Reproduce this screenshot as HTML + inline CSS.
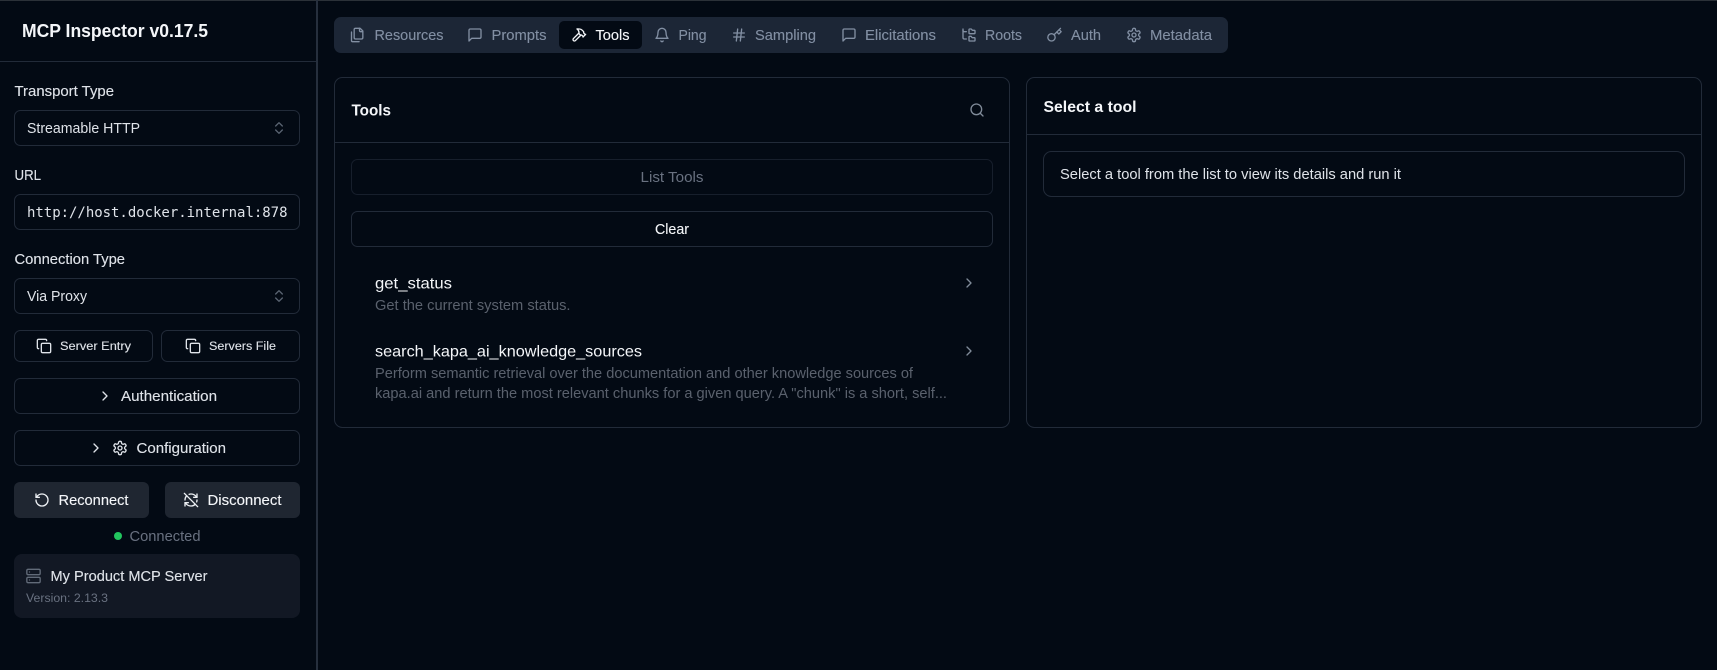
<!DOCTYPE html>
<html lang="en"><head><meta charset="utf-8"><title>MCP Inspector</title>
<style>
html,body{margin:0;padding:0;background:#030a14;width:1717px;height:670px;overflow:hidden}
svg.page{display:block}
text{font-family:"Liberation Sans",sans-serif;font-size:14.4px;fill:#e2e8f0;white-space:pre}
.m{stroke:currentColor;stroke-width:.12px}
.lab{fill:#dfe3e9;color:#dfe3e9}
.tab{fill:#828fa3;color:#828fa3;font-size:14.4px}
.dim{fill:#5a616d}
.w{fill:#f4f6f9;color:#f4f6f9}
.b{fill:none;stroke:#222b39;stroke-width:1}
.ic{fill:none;stroke-width:2;stroke-linecap:round;stroke-linejoin:round}
</style></head><body>
<svg class="page" xmlns="http://www.w3.org/2000/svg" width="1717" height="670" viewBox="0 0 1717 670">
<defs>
<symbol id="copy" viewBox="0 0 24 24"><rect x="8" y="8" width="14" height="14" rx="2"/><path d="M4 16c-1.1 0-2-.9-2-2V4c0-1.1.9-2 2-2h10c1.1 0 2 .9 2 2"/></symbol>
<symbol id="files" viewBox="0 0 24 24"><path d="M20 7h-3a2 2 0 0 1-2-2V2"/><path d="M9 18a2 2 0 0 1-2-2V4a2 2 0 0 1 2-2h7l4 4v10a2 2 0 0 1-2 2Z"/><path d="M3 7.6v12.8A1.6 1.6 0 0 0 4.6 22h9.8"/></symbol>
<symbol id="msg" viewBox="0 0 24 24"><path d="M21 15a2 2 0 0 1-2 2H7l-4 4V5a2 2 0 0 1 2-2h14a2 2 0 0 1 2 2z"/></symbol>
<symbol id="hammer" viewBox="0 0 24 24"><path d="m15 12-8.373 8.373a1 1 0 1 1-3-3L12 9"/><path d="m18 15 4-4"/><path d="m21.5 11.5-1.914-1.914A2 2 0 0 1 19 8.172V7l-2.26-2.26a6 6 0 0 0-4.202-1.756L9 2.96l.92.82A6.18 6.18 0 0 1 12 8.4V10l2 2h1.172a2 2 0 0 1 1.414.586L18.5 14.5"/></symbol>
<symbol id="bell" viewBox="0 0 24 24"><path d="M6 8a6 6 0 0 1 12 0c0 7 3 9 3 9H3s3-2 3-9"/><path d="M10.3 21a1.94 1.94 0 0 0 3.4 0"/></symbol>
<symbol id="hash" viewBox="0 0 24 24"><path d="M4 9h16M4 15h16M10 3 8 21M16 3l-2 18"/></symbol>
<symbol id="tree" viewBox="0 0 24 24"><path d="M20 10a1 1 0 0 0 1-1V6a1 1 0 0 0-1-1h-2.5a1 1 0 0 1-.8-.4l-.9-1.2A1 1 0 0 0 15 3h-2a1 1 0 0 0-1 1v5a1 1 0 0 0 1 1Z"/><path d="M20 21a1 1 0 0 0 1-1v-3a1 1 0 0 0-1-1h-2.9a1 1 0 0 1-.88-.55l-.42-.85a1 1 0 0 0-.92-.6H13a1 1 0 0 0-1 1v5a1 1 0 0 0 1 1Z"/><path d="M3 5a2 2 0 0 0 2 2h3"/><path d="M3 3v13a2 2 0 0 0 2 2h3"/></symbol>
<symbol id="key" viewBox="0 0 24 24"><circle cx="7.5" cy="15.5" r="5.5"/><path d="m21 2-9.6 9.6"/><path d="m15.5 7.5 3 3L22 7l-3-3"/></symbol>
<symbol id="gear" viewBox="0 0 24 24"><path d="M12.22 2h-.44a2 2 0 0 0-2 2v.18a2 2 0 0 1-1 1.73l-.43.25a2 2 0 0 1-2 0l-.15-.08a2 2 0 0 0-2.73.73l-.22.38a2 2 0 0 0 .73 2.73l.15.1a2 2 0 0 1 1 1.72v.51a2 2 0 0 1-1 1.74l-.15.09a2 2 0 0 0-.73 2.73l.22.38a2 2 0 0 0 2.73.73l.15-.08a2 2 0 0 1 2 0l.43.25a2 2 0 0 1 1 1.73V20a2 2 0 0 0 2 2h.44a2 2 0 0 0 2-2v-.18a2 2 0 0 1 1-1.73l.43-.25a2 2 0 0 1 2 0l.15.08a2 2 0 0 0 2.73-.73l.22-.39a2 2 0 0 0-.73-2.73l-.15-.08a2 2 0 0 1-1-1.74v-.5a2 2 0 0 1 1-1.74l.15-.09a2 2 0 0 0 .73-2.73l-.22-.38a2 2 0 0 0-2.73-.73l-.15.08a2 2 0 0 1-2 0l-.43-.25a2 2 0 0 1-1-1.73V4a2 2 0 0 0-2-2z"/><circle cx="12" cy="12" r="3"/></symbol>
<symbol id="updown" viewBox="0 0 24 24"><path d="m7 15 5 5 5-5"/><path d="m7 9 5-5 5 5"/></symbol>
<symbol id="right" viewBox="0 0 24 24"><path d="m9 18 6-6-6-6"/></symbol>
<symbol id="rotate" viewBox="0 0 24 24"><path d="M3 12a9 9 0 1 0 9-9 9.75 9.75 0 0 0-6.74 2.74L3 8"/><path d="M3 3v5h5"/></symbol>
<symbol id="off" viewBox="0 0 24 24"><path d="M21 8L18.74 5.74A9.75 9.75 0 0 0 12 3C11 3 10.03 3.16 9.13 3.47"/><path d="M8 16H3v5"/><path d="M3 12C3 9.51 4 7.26 5.64 5.64"/><path d="m3 16 2.26 2.26A9.75 9.75 0 0 0 12 21c2.49 0 4.74-1 6.36-2.64"/><path d="M21 12c0 1-.16 1.97-.47 2.87"/><path d="M21 3v5h-5"/><path d="M22 22 2 2"/></symbol>
<symbol id="server" viewBox="0 0 24 24"><rect x="2" y="2" width="20" height="8" rx="2"/><rect x="2" y="14" width="20" height="8" rx="2"/><path d="M6 6h.01M6 18h.01"/></symbol>
<symbol id="search" viewBox="0 0 24 24"><circle cx="11" cy="11" r="8"/><path d="m21 21-4.3-4.3"/></symbol>
</defs>

<rect width="1717" height="670" fill="#030a14"/>
<rect width="1717" height="1" fill="#2b3138"/>

<!-- sidebar -->
<rect x="316" y="0" width="2" height="670" fill="#262f3d"/>
<rect x="0" y="61" width="316" height="1" fill="#222b39"/>
<text x="22" y="37" textLength="186" lengthAdjust="spacingAndGlyphs" class="w" style="font-size:18px;font-weight:700">MCP Inspector v0.17.5</text>

<text x="14.5" y="96" textLength="99.5" lengthAdjust="spacingAndGlyphs" class="lab m">Transport Type</text>
<rect class="b" x="14.5" y="110.5" width="285" height="35" rx="6"/>
<text x="27" y="133" textLength="113" lengthAdjust="spacingAndGlyphs" class="lab">Streamable HTTP</text>
<use href="#updown" x="271" y="120" width="16" height="16" class="ic" stroke="#5a6472"/>

<text x="14.5" y="180" textLength="26.5" lengthAdjust="spacingAndGlyphs" class="lab m">URL</text>
<rect class="b" x="14.5" y="194.5" width="285" height="35" rx="6"/>
<text x="27" y="217" textLength="260.5" style="font-family:'DejaVu Sans Mono','Liberation Mono',monospace;font-size:14px" class="lab">http://host.docker.internal:878</text>

<text x="14.5" y="264" textLength="110.5" lengthAdjust="spacingAndGlyphs" class="lab m">Connection Type</text>
<rect class="b" x="14.5" y="278.5" width="285" height="35" rx="6"/>
<text x="27" y="301" textLength="60" lengthAdjust="spacingAndGlyphs" class="lab">Via Proxy</text>
<use href="#updown" x="271" y="288" width="16" height="16" class="ic" stroke="#5a6472"/>

<rect class="b" x="14.5" y="330.5" width="138" height="31" rx="6"/>
<use href="#copy" x="36" y="338" width="16" height="16" class="ic" stroke="#dfe3e9"/>
<text x="60" y="350" textLength="71" lengthAdjust="spacingAndGlyphs" class="lab m" style="font-size:12.4px">Server Entry</text>
<rect class="b" x="161.5" y="330.5" width="138" height="31" rx="6"/>
<use href="#copy" x="185" y="338" width="16" height="16" class="ic" stroke="#dfe3e9"/>
<text x="209" y="350" textLength="67" lengthAdjust="spacingAndGlyphs" class="lab m" style="font-size:12.4px">Servers File</text>

<rect class="b" x="14.5" y="378.5" width="285" height="35" rx="6"/>
<use href="#right" x="97" y="388" width="16" height="16" class="ic" stroke="#dfe3e9"/>
<text x="121" y="401" textLength="96" lengthAdjust="spacingAndGlyphs" class="lab m">Authentication</text>

<rect class="b" x="14.5" y="430.5" width="285" height="35" rx="6"/>
<use href="#right" x="88" y="440" width="16" height="16" class="ic" stroke="#dfe3e9"/>
<use href="#gear" x="112" y="440" width="16" height="16" class="ic" stroke="#dfe3e9"/>
<text x="136.5" y="453" textLength="89.5" lengthAdjust="spacingAndGlyphs" class="lab m">Configuration</text>

<rect x="14" y="482" width="135" height="36" rx="6" fill="#1f2631"/>
<use href="#rotate" x="34" y="492" width="16" height="16" class="ic" stroke="#eef1f5"/>
<text x="58.5" y="505" textLength="70" lengthAdjust="spacingAndGlyphs" class="w m">Reconnect</text>
<rect x="165" y="482" width="135" height="36" rx="6" fill="#1f2631"/>
<use href="#off" x="183" y="492" width="16" height="16" class="ic" stroke="#eef1f5"/>
<text x="207.5" y="505" textLength="74" lengthAdjust="spacingAndGlyphs" class="w m">Disconnect</text>

<circle cx="118" cy="536" r="4" fill="#22c55e"/>
<text x="129.5" y="541" textLength="71" lengthAdjust="spacingAndGlyphs" style="fill:#697180">Connected</text>

<rect x="14" y="554" width="286" height="64" rx="8" fill="#121824"/>
<use href="#server" x="25.5" y="568" width="16" height="16" class="ic" stroke="#626b79"/>
<text x="50.5" y="581" textLength="157" lengthAdjust="spacingAndGlyphs" class="lab m">My Product MCP Server</text>
<text x="26" y="602" textLength="82" lengthAdjust="spacingAndGlyphs" style="font-size:12.4px;fill:#697180">Version: 2.13.3</text>

<!-- tabs -->
<rect x="334" y="17" width="894" height="36" rx="7" fill="#1c2636"/>
<rect x="559" y="21" width="83" height="28" rx="5" fill="#030a14"/>
<use href="#files" x="349.5" y="27" width="16" height="16" class="ic" stroke="#828fa3"/>
<text x="374.5" y="40" textLength="69" lengthAdjust="spacingAndGlyphs" class="tab m">Resources</text>
<use href="#msg" x="467" y="27" width="16" height="16" class="ic" stroke="#828fa3"/>
<text x="491.5" y="40" textLength="55" lengthAdjust="spacingAndGlyphs" class="tab m">Prompts</text>
<use href="#hammer" x="571" y="27" width="16" height="16" class="ic" stroke="#f4f6f9"/>
<text x="595.5" y="40" textLength="34" lengthAdjust="spacingAndGlyphs" class="w m">Tools</text>
<use href="#bell" x="654" y="27" width="16" height="16" class="ic" stroke="#828fa3"/>
<text x="678.5" y="40" textLength="28" lengthAdjust="spacingAndGlyphs" class="tab m">Ping</text>
<use href="#hash" x="731" y="27" width="16" height="16" class="ic" stroke="#828fa3"/>
<text x="755" y="40" textLength="61" lengthAdjust="spacingAndGlyphs" class="tab m">Sampling</text>
<use href="#msg" x="841" y="27" width="16" height="16" class="ic" stroke="#828fa3"/>
<text x="865" y="40" textLength="71" lengthAdjust="spacingAndGlyphs" class="tab m">Elicitations</text>
<use href="#tree" x="961" y="27" width="16" height="16" class="ic" stroke="#828fa3"/>
<text x="985" y="40" textLength="37" lengthAdjust="spacingAndGlyphs" class="tab m">Roots</text>
<use href="#key" x="1046.5" y="27" width="16" height="16" class="ic" stroke="#828fa3"/>
<text x="1071" y="40" textLength="30" lengthAdjust="spacingAndGlyphs" class="tab m">Auth</text>
<use href="#gear" x="1126" y="27" width="16" height="16" class="ic" stroke="#828fa3"/>
<text x="1150" y="40" textLength="62" lengthAdjust="spacingAndGlyphs" class="tab m">Metadata</text>

<!-- tools card -->
<rect class="b" x="334.5" y="77.5" width="675" height="350" rx="8"/>
<path d="M335 142.5h674" class="b"/>
<text x="351.5" y="115.6" textLength="39.5" lengthAdjust="spacingAndGlyphs" class="w" style="font-size:16px;font-weight:700">Tools</text>
<use href="#search" x="969" y="102" width="16" height="16" class="ic" stroke="#808b99"/>
<rect class="b" x="351.5" y="159.5" width="641" height="35" rx="6" style="stroke:#171f2c"/>
<text x="672" y="182" text-anchor="middle" textLength="63" lengthAdjust="spacingAndGlyphs" style="fill:#697180">List Tools</text>
<rect class="b" x="351.5" y="211.5" width="641" height="35" rx="6"/>
<text x="672" y="234" text-anchor="middle" textLength="34" lengthAdjust="spacingAndGlyphs" class="w m">Clear</text>

<text x="375" y="288.6" textLength="77" lengthAdjust="spacingAndGlyphs" class="w" style="font-size:16px">get_status</text>
<text x="375" y="310" textLength="195.5" lengthAdjust="spacingAndGlyphs" class="dim">Get the current system status.</text>
<use href="#right" x="961" y="275" width="16" height="16" class="ic" stroke="#808b99"/>

<text x="375" y="356.6" textLength="267" lengthAdjust="spacingAndGlyphs" class="w" style="font-size:16px">search_kapa_ai_knowledge_sources</text>
<text x="375" y="378" textLength="538" lengthAdjust="spacingAndGlyphs" class="dim">Perform semantic retrieval over the documentation and other knowledge sources of</text>
<text x="375" y="398" textLength="572" lengthAdjust="spacingAndGlyphs" class="dim">kapa.ai and return the most relevant chunks for a given query. A "chunk" is a short, self...</text>
<use href="#right" x="961" y="343" width="16" height="16" class="ic" stroke="#808b99"/>

<!-- details card -->
<rect class="b" x="1026.5" y="77.5" width="675" height="350" rx="8"/>
<path d="M1027 134.5h674" class="b"/>
<text x="1043.5" y="112" textLength="93" lengthAdjust="spacingAndGlyphs" class="w" style="font-size:16px;font-weight:700">Select a tool</text>
<rect class="b" x="1043.5" y="151.5" width="641" height="45" rx="8"/>
<text x="1060" y="179" textLength="341" lengthAdjust="spacingAndGlyphs" class="lab">Select a tool from the list to view its details and run it</text>
</svg>
</body></html>
